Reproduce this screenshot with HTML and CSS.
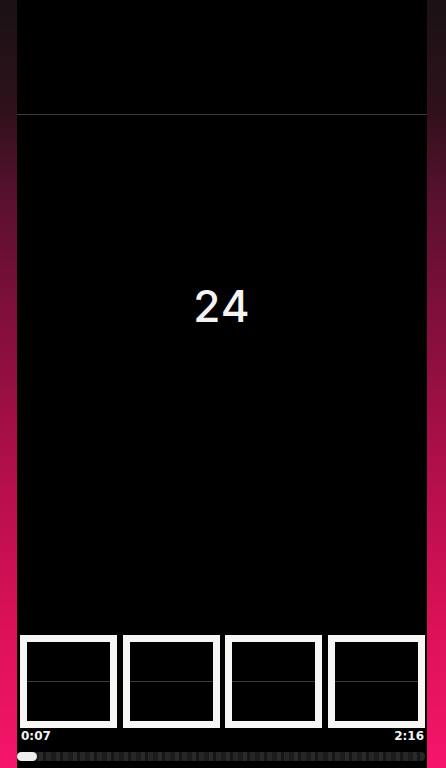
FILE: index.html
```html
<!DOCTYPE html>
<html>
<head>
<meta charset="utf-8">
<link rel="stylesheet" href="styles.css">
</head>
<body>
<div class="frame">
  <div class="side side-left"></div>
  <div class="screen">
    <div class="top"></div>
    <div class="middle">
      <div class="count">24</div>
    </div>
    <div class="thumbs">
      <div class="thumb"><div class="split"></div></div>
      <div class="thumb"><div class="split"></div></div>
      <div class="thumb"><div class="split"></div></div>
      <div class="thumb"><div class="split"></div></div>
    </div>
    <div class="times">
      <span class="time">0:07</span>
      <span class="time">2:16</span>
    </div>
    <div class="progress">
      <div class="knob"></div>
    </div>
  </div>
  <div class="side side-right"></div>
</div>
</body>
</html>
```
FILE: styles.css
```css
html, body {
  margin: 0;
  padding: 0;
  background: #000;
}
.frame {
  display: flex;
  width: 446px;
  height: 768px;
  overflow: hidden;
}
.side {
  height: 768px;
  background: linear-gradient(180deg, #1a1214 0%, #2e111a 14%, #5a1030 26%, #8a0f3e 45%, #b80f4c 64%, #dc1158 82%, #f6156a 100%);
}
.side-left { width: 17px; }
.side-right { width: 19px; }
.screen {
  width: 410px;
  display: flex;
  flex-direction: column;
  background: #000;
}
.top {
  height: 114px;
  border-bottom: 1px solid #3c3c3c;
  flex: none;
}
.middle {
  height: 520px;
  flex: none;
  display: flex;
  justify-content: center;
  box-sizing: border-box;
}
.count {
  margin-top: 163px;
  height: 56px;
  font-family: "Inter", "Lato", "DejaVu Sans", sans-serif;
  font-weight: 500;
  font-size: 44px;
  line-height: 56px;
  color: #f4f4f4;
  letter-spacing: 1px;
}
.thumbs {
  display: flex;
  gap: 5.6px;
  padding-left: 3px;
  flex: none;
}
.thumb {
  width: 97px;
  height: 93px;
  box-sizing: border-box;
  border: 7px solid #f6f6f4;
  display: flex;
  align-items: center;
}
.split {
  width: 100%;
  height: 1px;
  background: #3a3a3a;
}
.times {
  display: flex;
  justify-content: space-between;
  padding: 0 3px 0 4px;
  height: 14px;
  margin-top: 1px;
  flex: none;
}
.time {
  font-family: "DejaVu Sans", sans-serif;
  font-weight: 700;
  font-size: 12px;
  line-height: 14px;
  color: #f2f2f2;
}
.progress {
  margin-top: 9px;
  width: 408px;
  height: 9px;
  border-radius: 4px;
  background:
    repeating-linear-gradient(90deg, #1c1c1c 0px, #1c1c1c 5px, #2a2a2a 5px, #2a2a2a 9px, #161616 9px, #161616 12px, #262626 12px, #262626 17px);
  flex: none;
}
.knob {
  width: 20px;
  height: 9px;
  border-radius: 5px;
  background: #eeeeee;
}
```
